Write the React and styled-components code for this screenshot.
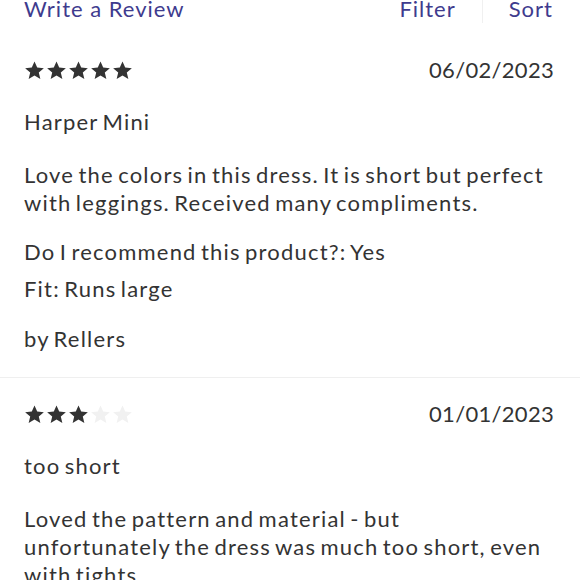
import React from 'react'
import styled, { createGlobalStyle } from 'styled-components'

const GlobalStyle = createGlobalStyle`
  html, body {
    margin: 0;
    padding: 0;
    background: #ffffff;
  }
  body {
    font-family: Lato, "Noto Sans", sans-serif;
    color: #333333;
    overflow: hidden;
  }
`

const reviews = [
  {
    rating: 5,
    date: '06/02/2023',
    title: 'Harper Mini',
    body: 'Love the colors in this dress. It is short but perfect with leggings. Received many compliments.',
    recommend: 'Yes',
    fit: 'Runs large',
    author: 'Rellers',
  },
  {
    rating: 3,
    date: '01/01/2023',
    title: 'too short',
    body: 'Loved the pattern and material - but unfortunately the dress was much too short, even with tights.',
  },
]

const Star = ({ filled }) => (
  <StarIcon viewBox="0 0 24 24" $filled={filled}>
    <path d="M12 1.6l3.1 7.1 7.6.6-5.8 5 1.8 7.5L12 17.8l-6.7 4 1.8-7.5-5.8-5 7.6-.6z" />
  </StarIcon>
)

const Review = ({ rating, date, title, body, recommend, fit, author }) => {
  return (
    <ReviewRoot>
      <TopRow>
        <Stars>
          {[1, 2, 3, 4, 5].map((n) => (
            <Star key={n} filled={n <= rating} />
          ))}
        </Stars>
        <Date>{date}</Date>
      </TopRow>
      <Title>{title}</Title>
      <Body>{body}</Body>
      {(recommend || fit) && (
        <Meta>
          {recommend && <MetaLine>Do I recommend this product?: {recommend}</MetaLine>}
          {fit && <MetaLine>Fit: {fit}</MetaLine>}
        </Meta>
      )}
      {author && <Author>by {author}</Author>}
    </ReviewRoot>
  )
}

export default function App() {
  return (
    <>
      <GlobalStyle />
      <Page>
        <Toolbar>
          <Link>Write a Review</Link>
          <Actions>
            <Link>Filter</Link>
            <Separator />
            <Link>Sort</Link>
          </Actions>
        </Toolbar>
        <List>
          {reviews.map((r) => (
            <Review key={r.date} {...r} />
          ))}
        </List>
      </Page>
    </>
  )
}

const Page = styled.div`
  margin-top: -5px;
  width: 580px;
  font-size: 22px;
  line-height: 28px;
  letter-spacing: 1.2px;
  word-spacing: -2.5px;
`

const Toolbar = styled.div`
  display: flex;
  justify-content: space-between;
  align-items: center;
  padding: 0 27px 0 24px;
`

const Link = styled.span`
  color: #3e3b8e;
  font-size: 22px;
  letter-spacing: 1px;
  word-spacing: 0;
  cursor: pointer;
`

const Actions = styled.div`
  display: flex;
  align-items: center;
  gap: 26px;
`

const Separator = styled.div`
  width: 1px;
  height: 28px;
  background-color: #f0f0f0;
`

const List = styled.div`
  margin-top: 33px;
`

const ReviewRoot = styled.div`
  padding: 0 27px 24px 24px;
  border-bottom: 1px solid #efefef;
  & + & {
    padding-top: 22px;
  }
`

const TopRow = styled.div`
  display: flex;
  justify-content: space-between;
  align-items: center;
`

const Stars = styled.div`
  display: flex;
  gap: 1px;
`

const StarIcon = styled.svg`
  width: 21px;
  height: 21px;
  fill: ${(p) => (p.$filled ? '#333333' : '#f1f1f1')};
`

const Date = styled.div`
  letter-spacing: 0.3px;
  margin-right: -1px;
`

const Title = styled.div`
  margin-top: 24px;
`

const Body = styled.div`
  margin-top: 25px;
  padding-right: 5px;
`

const Meta = styled.div`
  margin-top: 21px;
  display: flex;
  flex-direction: column;
  gap: 9px;
`

const MetaLine = styled.div``

const Author = styled.div`
  margin-top: 22px;
`
